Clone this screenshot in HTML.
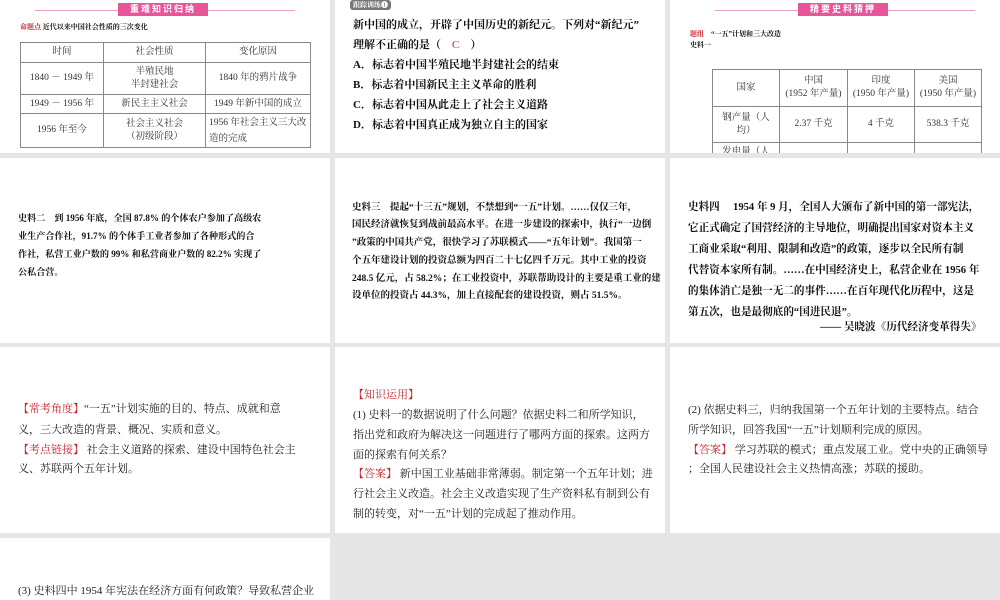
<!DOCTYPE html>
<html><head><meta charset="utf-8"><style>
*{margin:0;padding:0;box-sizing:border-box}
body{width:1000px;height:600px;background:#e6e6e6;position:relative;overflow:hidden;font-family:"Liberation Serif","Noto Serif CJK SC","Noto Sans CJK SC",serif;color:#222}
.p{position:absolute;background:#fff;overflow:hidden}
.a{position:absolute;white-space:nowrap}
.b{font-family:"Liberation Serif","Noto Serif CJK SC",serif;font-weight:bold;color:#111}
.r{color:#c0282d}
table{position:absolute;border-collapse:collapse;font-size:9.5px;text-align:center;color:#333}
td{border:1px solid #888;line-height:13px}
.rib{position:absolute;height:13px;background:#e8559b;color:#fff;font-size:9px;font-weight:bold;text-align:center;line-height:13px;letter-spacing:2px;font-family:"Liberation Sans","Noto Sans CJK SC",sans-serif}
.ln{position:absolute;height:1px;background:#e9a0c4}
</style></head><body>
<div class="p" style="left:0;top:0;width:330px;height:153px">
 <div class="ln" style="left:35px;top:10px;width:260px"></div>
 <div class="rib" style="left:118px;top:3px;width:90px">重难知识归纳</div>
 <div class="a b" style="left:20px;top:22px;font-size:7px"><span class="r">命题点</span> 近代以来中国社会性质的三次变化</div>
 <table style="left:20px;top:42px;width:291px">
  <tr style="height:20px"><td style="width:83px">时间</td><td style="width:102px">社会性质</td><td>变化原因</td></tr>
  <tr style="height:32px"><td>1840 － 1949 年</td><td>半殖民地<br>半封建社会</td><td>1840 年的鸦片战争</td></tr>
  <tr style="height:19px"><td>1949 － 1956 年</td><td>新民主主义社会</td><td>1949 年新中国的成立</td></tr>
  <tr style="height:34px"><td>1956 年至今</td><td>社会主义社会<br>（初级阶段）</td><td style="text-align:left;padding-left:3px;line-height:16px">1956 年社会主义三大改造的完成</td></tr>
 </table>
</div>
<div class="p b" style="left:335px;top:0;width:330px;height:153px;font-size:11px">
 <div class="a" style="left:15px;top:0;font-size:7px;background:#777;color:#fff;padding:0 3px;border-radius:3px">跟踪训练❶</div>
 <div class="a" style="left:18px;top:16px">新中国的成立，开辟了中国历史的新纪元。下列对“新纪元”</div>
 <div class="a" style="left:18px;top:36px">理解不正确的是（　<span class="r" style="font-weight:normal">C</span>　）</div>
 <div class="a" style="left:18px;top:56px">A．标志着中国半殖民地半封建社会的结束</div>
 <div class="a" style="left:18px;top:76px">B．标志着中国新民主主义革命的胜利</div>
 <div class="a" style="left:18px;top:96px">C．标志着中国从此走上了社会主义道路</div>
 <div class="a" style="left:18px;top:116px">D．标志着中国真正成为独立自主的国家</div>
</div>
<div class="p" style="left:670px;top:0;width:330px;height:153px">
 <div class="ln" style="left:45px;top:10px;width:260px"></div>
 <div class="rib" style="left:128px;top:3px;width:90px">精要史料猜押</div>
 <div class="a b" style="left:20px;top:29px;font-size:7px"><span class="r">题组</span>　“一五”计划和三大改造</div>
 <div class="a b" style="left:20px;top:40px;font-size:7px">史料一</div>
 <table style="left:42px;top:69px;width:270px">
  <tr style="height:37px"><td style="width:67px">国家</td><td style="width:68px">中国<br>(1952 年产量)</td><td style="width:67px">印度<br>(1950 年产量)</td><td>美国<br>(1950 年产量)</td></tr>
  <tr style="height:36px"><td>钢产量（人<br>均）</td><td>2.37 千克</td><td>4 千克</td><td>538.3 千克</td></tr>
  <tr style="height:20px"><td>发电量（人</td><td></td><td></td><td></td></tr>
 </table>
</div>
<div class="p b" style="left:0;top:158px;width:330px;height:185px;font-size:9.1px">
 <div class="a" style="left:18px;top:53px">史料二　到 1956 年底，全国 87.8% 的个体农户参加了高级农</div>
 <div class="a" style="left:18px;top:71px">业生产合作社，91.7% 的个体手工业者参加了各种形式的合</div>
 <div class="a" style="left:18px;top:89px">作社，私营工业户数的 99% 和私营商业户数的 82.2% 实现了</div>
 <div class="a" style="left:18px;top:107px">公私合营。</div>
</div>
<div class="p b" style="left:335px;top:158px;width:330px;height:185px;font-size:9.5px">
 <div class="a" style="left:17px;top:41px">史料三　提起“十三五”规划，不禁想到“一五”计划。……仅仅三年，</div>
 <div class="a" style="left:17px;top:58px">国民经济就恢复到战前最高水平。在进一步建设的探索中，执行“一边倒</div>
 <div class="a" style="left:17px;top:76px">”政策的中国共产党，很快学习了苏联模式——“五年计划”。我国第一</div>
 <div class="a" style="left:17px;top:94px">个五年建设计划的投资总额为四百二十七亿四千万元。其中工业的投资</div>
 <div class="a" style="left:17px;top:112px">248.5 亿元，占 58.2%；在工业投资中，苏联帮助设计的主要是重工业的建</div>
 <div class="a" style="left:17px;top:129px">设单位的投资占 44.3%，加上直接配套的建设投资，则占 51.5%。</div>
</div>
<div class="p b" style="left:670px;top:158px;width:330px;height:185px;font-size:10.6px">
 <div class="a" style="left:18px;top:41px">史料四　 1954 年 9 月，全国人大颁布了新中国的第一部宪法，</div>
 <div class="a" style="left:18px;top:62px">它正式确定了国营经济的主导地位，明确提出国家对资本主义</div>
 <div class="a" style="left:18px;top:83px">工商业采取“利用、限制和改造”的政策，逐步以全民所有制</div>
 <div class="a" style="left:18px;top:104px">代替资本家所有制。……在中国经济史上，私营企业在 1956 年</div>
 <div class="a" style="left:18px;top:125px">的集体消亡是独一无二的事件……在百年现代化历程中，这是</div>
 <div class="a" style="left:18px;top:146px">第五次，也是最彻底的“国进民退”。</div>
 <div class="a" style="left:150px;top:161px">—— 吴晓波《历代经济变革得失》</div>
</div>
<div class="p" style="left:0;top:347px;width:330px;height:186px;font-size:11px">
 <div class="a" style="left:18px;top:53px"><span class="r">【常考角度】</span>“一五”计划实施的目的、特点、成就和意</div>
 <div class="a" style="left:18px;top:74px">义，三大改造的背景、概况、实质和意义。</div>
 <div class="a" style="left:18px;top:94px"><span class="r">【考点链接】</span> 社会主义道路的探索、建设中国特色社会主</div>
 <div class="a" style="left:18px;top:113px">义、苏联两个五年计划。</div>
</div>
<div class="p" style="left:335px;top:347px;width:330px;height:186px;font-size:11px">
 <div class="a r" style="left:18px;top:39px">【知识运用】</div>
 <div class="a" style="left:18px;top:59px">(1) 史料一的数据说明了什么问题？依据史料二和所学知识，</div>
 <div class="a" style="left:18px;top:79px">指出党和政府为解决这一问题进行了哪两方面的探索。这两方</div>
 <div class="a" style="left:18px;top:99px">面的探索有何关系？</div>
 <div class="a" style="left:18px;top:118px"><span class="r">【答案】</span> 新中国工业基础非常薄弱。制定第一个五年计划；进</div>
 <div class="a" style="left:18px;top:138px">行社会主义改造。社会主义改造实现了生产资料私有制到公有</div>
 <div class="a" style="left:18px;top:158px">制的转变，对“一五”计划的完成起了推动作用。</div>
</div>
<div class="p" style="left:670px;top:347px;width:330px;height:186px;font-size:11px">
 <div class="a" style="left:18px;top:54px">(2) 依据史料三，归纳我国第一个五年计划的主要特点。结合</div>
 <div class="a" style="left:18px;top:74px">所学知识，回答我国“一五”计划顺利完成的原因。</div>
 <div class="a" style="left:18px;top:94px"><span class="r">【答案】</span> 学习苏联的模式；重点发展工业。党中央的正确领导</div>
 <div class="a" style="left:18px;top:113px">；全国人民建设社会主义热情高涨；苏联的援助。</div>
</div>
<div class="p" style="left:0;top:538px;width:330px;height:62px;font-size:11px">
 <div class="a" style="left:18px;top:44px">(3) 史料四中 1954 年宪法在经济方面有何政策？导致私营企业</div>
</div>
</body></html>
